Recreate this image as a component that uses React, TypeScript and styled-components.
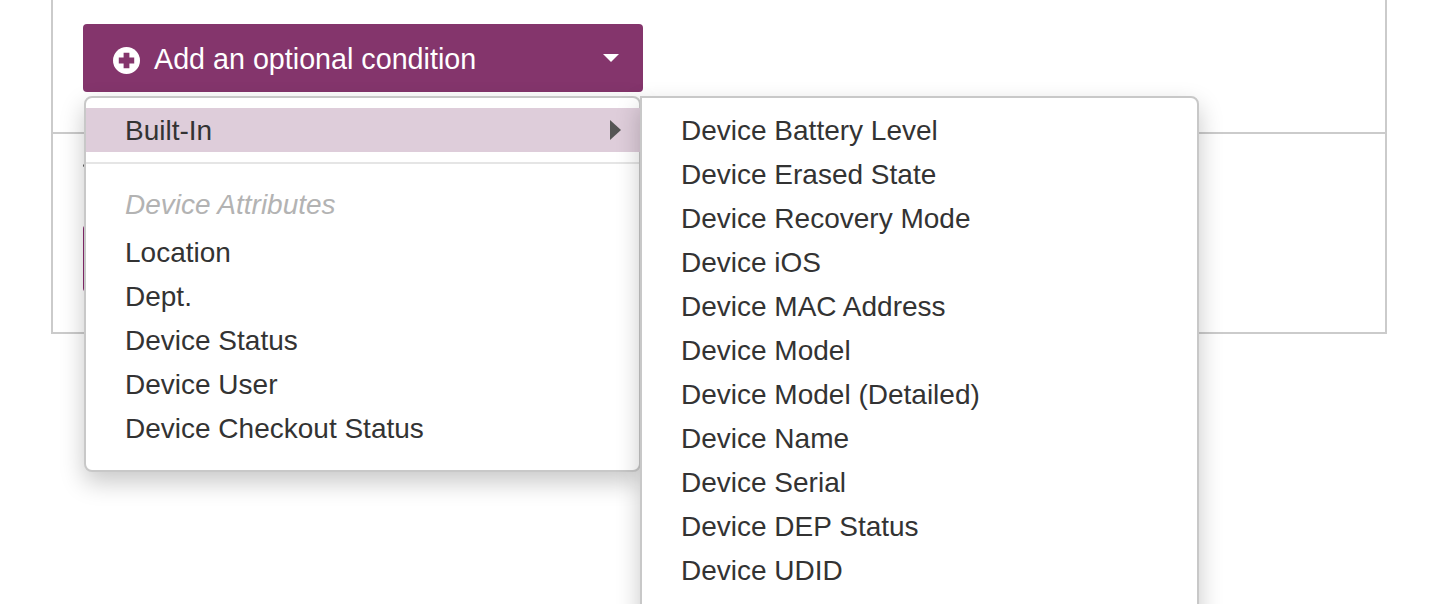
import React from "react";
import styled, { createGlobalStyle } from "styled-components";

const builtInItems = [
  "Device Battery Level",
  "Device Erased State",
  "Device Recovery Mode",
  "Device iOS",
  "Device MAC Address",
  "Device Model",
  "Device Model (Detailed)",
  "Device Name",
  "Device Serial",
  "Device DEP Status",
  "Device UDID",
  "Device IMEI",
];

const attributeItems = ["Location", "Dept.", "Device Status", "Device User", "Device Checkout Status"];

const GlobalStyle = createGlobalStyle`
  html, body {
    margin: 0;
    padding: 0;
    height: 604px;
    overflow: hidden;
    background: #fff;
    font-family: "Liberation Sans", Arial, sans-serif;
  }
`;

const Page = styled.div`
  height: 604px;
  overflow: hidden;
  padding-left: 51px;
`;

const Panel = styled.div`
  width: 1336px;
  box-sizing: border-box;
  border: 2px solid #cbcbcb;
  border-top: 0;
`;

const ConditionSection = styled.div`
  position: relative;
  height: 132px;
  padding: 24px 30px 0;
  box-sizing: border-box;
`;

const ActionSection = styled.div`
  height: 200px;
  border-top: 2px solid #cbcbcb;
  box-sizing: border-box;
  padding: 30px 30px 0;
`;

const MarkDot = styled.div`
  width: 3px;
  height: 3px;
  margin-bottom: 58px;
  border-radius: 50%;
  background: #555;
`;

const ActionButton = styled.div`
  width: 560px;
  height: 67px;
  border-radius: 4px;
  background: #8a2a70;
`;

const AddButton = styled.button`
  display: flex;
  align-items: center;
  width: 560px;
  height: 68px;
  padding: 2px 24px 0 30px;
  box-sizing: border-box;
  border: 0;
  border-radius: 4px;
  background: #84356c;
  color: #fff;
  font-family: inherit;
  font-size: 28.7px;
  cursor: pointer;
`;

const PlusIcon = styled.svg`
  width: 27px;
  height: 27px;
  margin: 2px 14px 0 0;
  flex: none;
`;

const Caret = styled.span`
  margin: -2px 0 0 auto;
  width: 0;
  height: 0;
  border-left: 8px solid transparent;
  border-right: 8px solid transparent;
  border-top: 8px solid #fff;
`;

const Menu = styled.div<{ $left: number; $width: number }>`
  position: absolute;
  left: ${(p) => p.$left}px;
  top: 96px;
  width: ${(p) => p.$width}px;
  box-sizing: border-box;
  padding: 10px 0;
  border: 2px solid #c8c8c8;
  border-radius: 8px;
  background: #fff;
  box-shadow: 0 10px 24px rgba(0, 0, 0, 0.22);
`;

const MainMenu = styled(Menu)`
  height: 376px;
`;

const SubMenu = styled(Menu)`
  border-top-left-radius: 0;
  padding-bottom: 40px;
`;

const Item = styled.div<{ $active?: boolean }>`
  position: relative;
  height: 44px;
  line-height: 46px;
  padding-left: 39px;
  margin-right: ${(p) => (p.$active ? "-2px" : "0")};
  font-size: 28px;
  color: #333;
  white-space: nowrap;
  background: ${(p) => (p.$active ? "#decdda" : "transparent")};
`;

const ItemArrow = styled.span`
  position: absolute;
  right: 20px;
  top: 12px;
  width: 0;
  height: 0;
  border-top: 10px solid transparent;
  border-bottom: 10px solid transparent;
  border-left: 11px solid #555;
`;

const Separator = styled.div`
  height: 2px;
  margin: 10px 0 18px;
  background: #e5e5e5;
`;

const GroupTitle = styled(Item)`
  height: 48px;
  font-style: italic;
  color: #b3b3b3;
`;

export default function App() {
  return (
    <Page>
      <GlobalStyle />
      <Panel>
        <ConditionSection>
          <AddButton>
            <PlusIcon viewBox="0 0 28 28">
              <circle cx="14" cy="14" r="14" fill="#fff" />
              <path d="M11 6h6v5h5v6h-5v5h-6v-5H6v-6h5z" fill="#84356c" />
            </PlusIcon>
            Add an optional condition
            <Caret />
          </AddButton>
          <MainMenu $left={31} $width={557}>
            <Item $active>
              Built-In
              <ItemArrow />
            </Item>
            <Separator />
            <GroupTitle>Device Attributes</GroupTitle>
            {attributeItems.map((item) => (
              <Item key={item}>{item}</Item>
            ))}
          </MainMenu>
          <SubMenu $left={587} $width={559}>
            {builtInItems.map((item) => (
              <Item key={item}>{item}</Item>
            ))}
          </SubMenu>
        </ConditionSection>
        <ActionSection>
          <MarkDot />
          <ActionButton />
        </ActionSection>
      </Panel>
    </Page>
  );
}
